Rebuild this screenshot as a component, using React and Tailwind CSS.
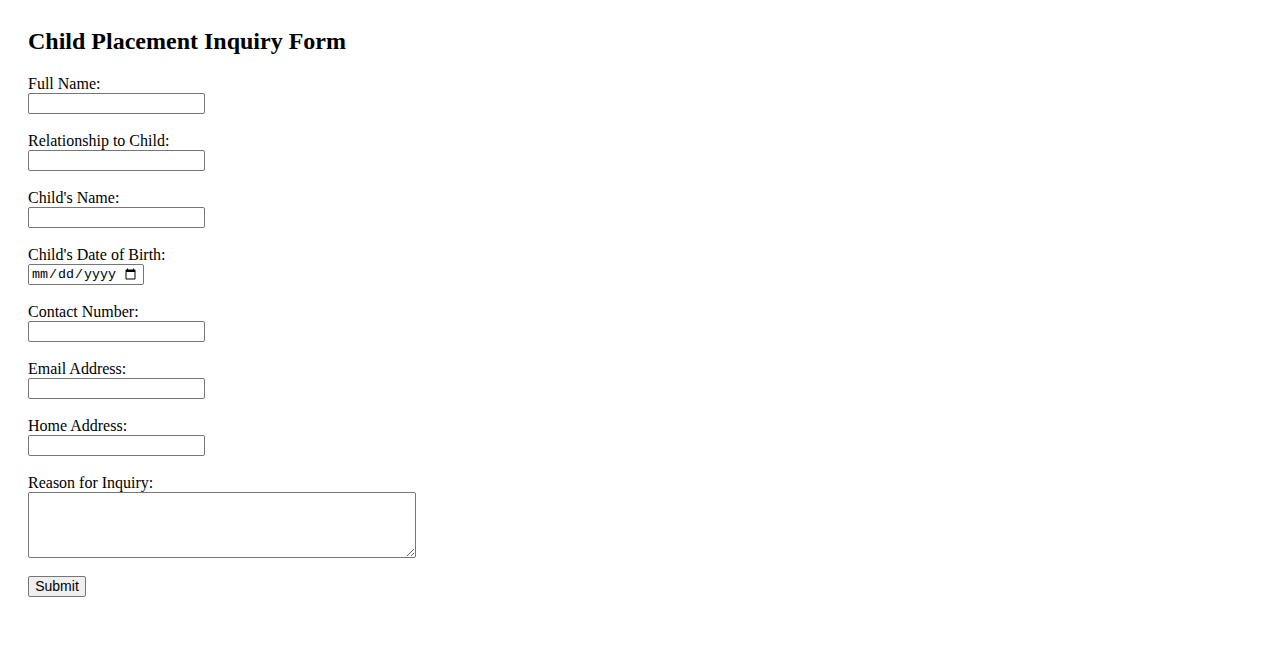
import React from "react";

const inputCls =
  "block w-[177px] h-[21px] border border-[#767676] rounded-[2px] bg-white px-[2px] py-[1px] text-[13.333px] font-['Arial','Liberation_Sans',sans-serif] text-black";

function Field({ label, type = "text", dateInput }) {
  return (
    <div className="mb-[18px]">
      <label className="block leading-[18px] text-[16px]">{label}</label>
      {dateInput ? (
        <input
          type="date"
          className="block w-[116px] h-[21px] border border-[#767676] rounded-[2px] bg-white pl-[2px] pr-[4px] py-[1px] text-[13.333px] font-['Liberation_Mono',monospace] text-black"
        />
      ) : (
        <input type={type} className={inputCls} />
      )}
    </div>
  );
}

export default function App() {
  return (
    <div className="min-h-[650px] bg-white pt-[27px] pl-[28px] text-black font-['Liberation_Serif','Times_New_Roman',serif]">
      <h2 className="text-[24px] font-bold leading-[28px] mb-[20px]">
        Child Placement Inquiry Form
      </h2>
      <form onSubmit={(e) => e.preventDefault()} className="flex flex-col items-start">
        <Field label="Full Name:" />
        <Field label="Relationship to Child:" />
        <Field label="Child's Name:" />
        <Field label="Child's Date of Birth:" dateInput />
        <Field label="Contact Number:" type="tel" />
        <Field label="Email Address:" type="email" />
        <Field label="Home Address:" />
        <div className="mb-[18px]">
          <label className="block leading-[18px] text-[16px]">Reason for Inquiry:</label>
          <textarea className="block w-[388px] h-[66px] border border-[#767676] rounded-[2px] bg-white px-[2px] py-[2px] text-[13.333px] font-['Liberation_Mono',monospace]" />
        </div>
        <button
          type="submit"
          className="w-[58px] h-[21px] px-0 py-0 border border-[#767676] rounded-[2px] bg-[#efefef] text-center text-[14px] leading-[19px] font-['Arial','Liberation_Sans',sans-serif] text-black"
        >
          Submit
        </button>
      </form>
    </div>
  );
}
